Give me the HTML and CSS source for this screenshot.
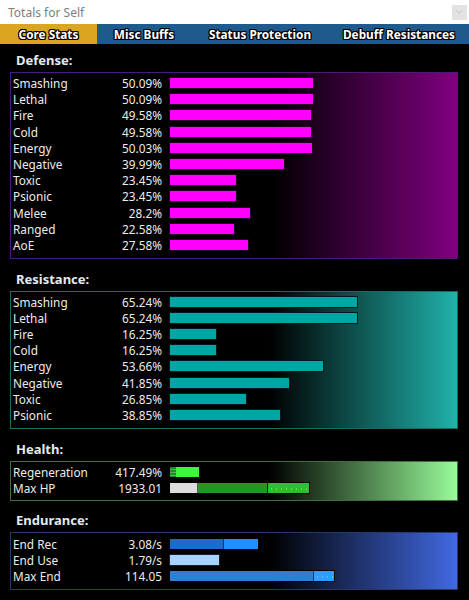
FILE: index.html
```html
<!DOCTYPE html>
<html lang="en">
<head>
<meta charset="utf-8">
<title>Totals for Self</title>
<link rel="stylesheet" href="styles.css">
</head>
<body>
<div class="window">
  <header class="titlebar">
    <span class="title">Totals for Self</span>
    <span class="menu-btn"><svg width="7" height="4" viewBox="0 0 7 4"><path d="M0.5 0.5 L3.5 3.2 L6.5 0.5" fill="none" stroke="#c4c4c4" stroke-width="1"/></svg></span>
  </header>
  <nav class="tabs">
    <div class="tab tab-core active">Core Stats</div>
    <div class="tab tab-misc">Misc Buffs</div>
    <div class="tab tab-status">Status Protection</div>
    <div class="tab tab-debuff">Debuff Resistances</div>
  </nav>
  <main class="content">
    <section class="section">
      <h2 class="section-title">Defense:</h2>
      <div class="panel panel-defense">
        <div class="row"><span class="label">Smashing</span><span class="value">50.09%</span><div class="track"><span class="bar bar-def" style="width:144.5px"></span></div></div>
        <div class="row"><span class="label">Lethal</span><span class="value">50.09%</span><div class="track"><span class="bar bar-def" style="width:144.5px"></span></div></div>
        <div class="row"><span class="label">Fire</span><span class="value">49.58%</span><div class="track"><span class="bar bar-def" style="width:143px"></span></div></div>
        <div class="row"><span class="label">Cold</span><span class="value">49.58%</span><div class="track"><span class="bar bar-def" style="width:143px"></span></div></div>
        <div class="row"><span class="label">Energy</span><span class="value">50.03%</span><div class="track"><span class="bar bar-def" style="width:144.3px"></span></div></div>
        <div class="row"><span class="label">Negative</span><span class="value">39.99%</span><div class="track"><span class="bar bar-def" style="width:115.5px"></span></div></div>
        <div class="row"><span class="label">Toxic</span><span class="value">23.45%</span><div class="track"><span class="bar bar-def" style="width:68px"></span></div></div>
        <div class="row"><span class="label">Psionic</span><span class="value">23.45%</span><div class="track"><span class="bar bar-def" style="width:68px"></span></div></div>
        <div class="row"><span class="label">Melee</span><span class="value">28.2%</span><div class="track"><span class="bar bar-def" style="width:81.5px"></span></div></div>
        <div class="row"><span class="label">Ranged</span><span class="value">22.58%</span><div class="track"><span class="bar bar-def" style="width:65.5px"></span></div></div>
        <div class="row"><span class="label">AoE</span><span class="value">27.58%</span><div class="track"><span class="bar bar-def" style="width:80px"></span></div></div>
      </div>
    </section>
    <section class="section">
      <h2 class="section-title">Resistance:</h2>
      <div class="panel panel-res">
        <div class="row"><span class="label">Smashing</span><span class="value">65.24%</span><div class="track"><span class="bar bar-res" style="width:189px"></span></div></div>
        <div class="row"><span class="label">Lethal</span><span class="value">65.24%</span><div class="track"><span class="bar bar-res" style="width:189px"></span></div></div>
        <div class="row"><span class="label">Fire</span><span class="value">16.25%</span><div class="track"><span class="bar bar-res" style="width:47.5px"></span></div></div>
        <div class="row"><span class="label">Cold</span><span class="value">16.25%</span><div class="track"><span class="bar bar-res" style="width:47.5px"></span></div></div>
        <div class="row"><span class="label">Energy</span><span class="value">53.66%</span><div class="track"><span class="bar bar-res" style="width:155px"></span></div></div>
        <div class="row"><span class="label">Negative</span><span class="value">41.85%</span><div class="track"><span class="bar bar-res" style="width:120.5px"></span></div></div>
        <div class="row"><span class="label">Toxic</span><span class="value">26.85%</span><div class="track"><span class="bar bar-res" style="width:77.5px"></span></div></div>
        <div class="row"><span class="label">Psionic</span><span class="value">38.85%</span><div class="track"><span class="bar bar-res" style="width:112px"></span></div></div>
      </div>
    </section>
    <section class="section">
      <h2 class="section-title">Health:</h2>
      <div class="panel panel-health">
        <div class="row"><span class="label">Regeneration</span><span class="value">417.49%</span><div class="track"><span class="bar bar-split"><span class="seg seg-regen-base dotted" style="width:6px"></span><span class="seg seg-regen" style="width:23px"></span></span></div></div>
        <div class="row"><span class="label">Max HP</span><span class="value">1933.01</span><div class="track"><span class="bar bar-split"><span class="seg seg-hp-base" style="width:27px"></span><span class="seg seg-hp" style="width:69px"></span><span class="seg seg-hp-over dotted" style="width:41px"></span></span></div></div>
      </div>
    </section>
    <section class="section">
      <h2 class="section-title">Endurance:</h2>
      <div class="panel panel-end">
        <div class="row"><span class="label">End Rec</span><span class="value">3.08/s</span><div class="track"><span class="bar bar-split"><span class="seg seg-endrec-base" style="width:53px"></span><span class="seg seg-endrec" style="width:34px"></span></span></div></div>
        <div class="row"><span class="label">End Use</span><span class="value">1.79/s</span><div class="track"><span class="bar bar-enduse" style="width:51px"></span></div></div>
        <div class="row"><span class="label">Max End</span><span class="value">114.05</span><div class="track"><span class="bar bar-split"><span class="seg seg-maxend-base" style="width:143px"></span><span class="seg seg-maxend dotted" style="width:20px"></span></span></div></div>
      </div>
    </section>
  </main>
</div>
</body>
</html>
```

FILE: styles.css
```css
html, body {
  margin: 0;
  padding: 0;
  background: #000;
}

body {
  width: 469px;
  height: 600px;
  overflow: hidden;
  font-family: "Noto Sans", "Open Sans", "DejaVu Sans", sans-serif;
}

.window {
  display: flex;
  flex-direction: column;
  height: 600px;
  background: #000;
}

.titlebar {
  height: 24px;
  box-sizing: border-box;
  background: #fff;
  display: flex;
  align-items: center;
  justify-content: space-between;
  padding: 0 2px 0 8px;
}

.title {
  color: #7e7e7e;
  font-size: 12px;
}

.menu-btn {
  width: 15px;
  height: 15px;
  background: #e3e3e3;
  display: flex;
  align-items: center;
  justify-content: center;
}

.tabs {
  display: flex;
  height: 20px;
  background: #1e5a8c;
  border-bottom: 1px solid #000;
}

.tab {
  display: flex;
  align-items: center;
  justify-content: center;
  color: #fff;
  font-weight: bold;
  font-size: 11.8px;
  text-shadow:
    -1px -1px 0 #000, 1px -1px 0 #000, -1px 1px 0 #000, 1px 1px 0 #000,
    0 -1px 0 #000, 0 1px 0 #000, -1px 0 0 #000, 1px 0 0 #000;
}

.tab-core { width: 97px; }
.tab-misc { width: 94px; }
.tab-status { width: 138px; }
.tab-debuff { width: 140px; }

.tab.active {
  background: #daa520;
}

.content {
  display: flex;
  flex-direction: column;
  gap: 11.5px;
  padding: 7px 11px 0 10px;
}

.section {
  display: flex;
  flex-direction: column;
}

.section-title {
  margin: 0 0 4px 6px;
  height: 16px;
  line-height: 16px;
  font-size: 13px;
  font-weight: bold;
  color: #e2eaf2;
}

.panel {
  border: 1px solid;
  padding: 2px 0 5px 2px;
}

.panel-defense {
  border-color: #4b1a78;
  background: linear-gradient(to right, #000 0%, #000 58.5%, #800080 100%);
}

.panel-res {
  border-color: #1c6a66;
  background: linear-gradient(to right, #000 0%, #000 58%, #20b2aa 100%);
}

.panel-health {
  border-color: #426e42;
  background: linear-gradient(to right, #000 0%, #000 58%, #98fb98 100%);
  padding-bottom: 4px;
}

.panel-end {
  border-color: #263866;
  background: linear-gradient(to right, #000 0%, #000 58%, #4169e1 100%);
}

.row {
  display: grid;
  grid-template-columns: 90px 59px 1fr;
  height: 16.2px;
  align-items: center;
  font-size: 11.8px;
  color: #ececec;
  white-space: nowrap;
}

.value {
  text-align: right;
}

.track {
  margin-left: 7px;
  display: flex;
  align-items: center;
  height: 12px;
}

.bar {
  display: flex;
  height: 12px;
  box-sizing: border-box;
  border: 1px solid rgba(0, 0, 0, 0.85);
}

.bar-def { background: #ff00ff; }
.bar-res { background: #00a5a5; }

.bar-split {
  background: transparent;
}

.seg {
  display: block;
  height: 100%;
  flex: none;
}

.dotted {
  background-image: radial-gradient(circle, rgba(255, 255, 255, 0.28) 0.6px, transparent 0.8px);
  background-size: 5px 10px;
  background-position: 1px 1px;
}

.seg-regen-base { background-color: #1f8a1f; background-size: 2px 3px; }
.seg-regen { background-color: #3cf53c; }

.seg-hp-base { background-color: #dcdcdc; border-right: 1px solid #555; }
.seg-hp { background-color: #249624; }
.seg-hp-over { background-color: #2fbe2f; border-left: 1px solid #111; }

.seg-endrec-base { background-color: #1d6ccc; border-right: 1px solid #0c3a70; }
.seg-endrec { background-color: #1e90ff; }

.bar-enduse { background: #a6d2ff; }

.seg-maxend-base { background-color: #2e7fd2; border-right: 1px solid #0c3a70; }
.seg-maxend { background-color: #2f9dff; }
```
